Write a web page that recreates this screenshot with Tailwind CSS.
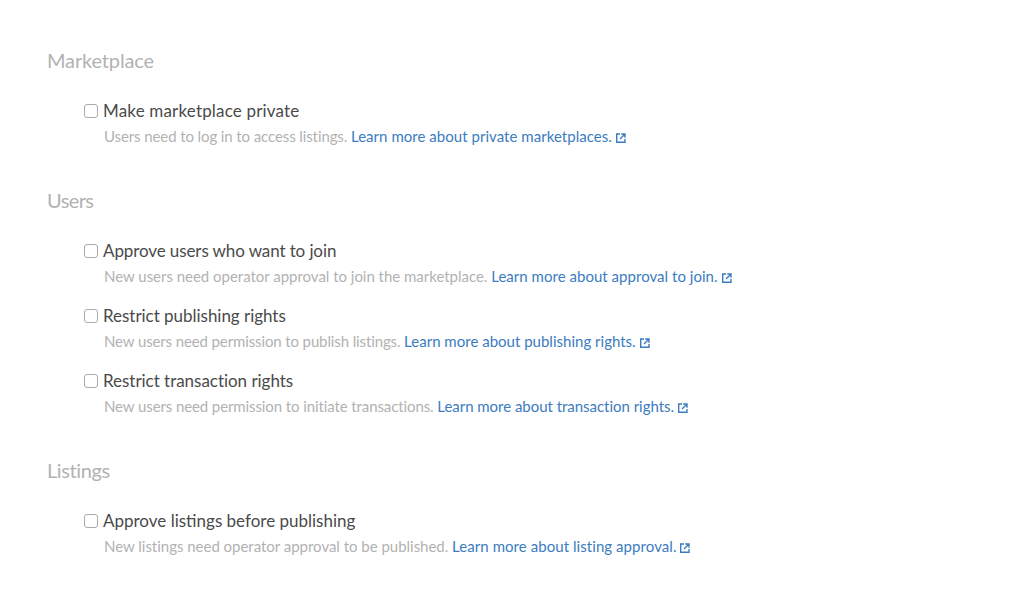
<!DOCTYPE html>
<html><head><meta charset="utf-8"><script src="https://cdn.jsdelivr.net/npm/@tailwindcss/browser@4"></script></head>
<body class="bg-white font-['Lato',sans-serif] antialiased">
<main class="w-[1024px] h-[605px] overflow-hidden pl-[47px] pt-[47px]">
<section>
<h2 class="text-[20px] leading-[26px] tracking-[-0.15px] text-[#b2b2b2]">Marketplace</h2>
<div class="pl-[37px] pt-[25px] flex flex-col">
<div>
<label class="flex items-center h-[26px] gap-[5px] text-[17px] tracking-[0.175px] text-[#4a4a4a]"><span class="w-[14px] h-[14px] border-[1.5px] border-[#ababab] rounded-[3px]"></span>Make marketplace private</label>
<p class="pl-[20px] h-[25px] leading-[25px] text-[15px] tracking-[-0.1px] text-[#b2b2b2]">Users need to log in to access listings. <a class="text-[#3c7cc0] tracking-[0.04px]">Learn more about private marketplaces.<svg class="inline w-[10px] h-[10px] ml-[4px] align-[-1px]" viewBox="0 0 10 10" fill="none" stroke="#3c7cc0" stroke-width="1.4"><path d="M4 1H.7v8.300h8.300V6M5.200 1H9v3.800M9 1L4 6"/></svg></a></p>
</div>
</div>
</section>
<section class="pt-[37.5px]">
<h2 class="text-[20px] leading-[26px] tracking-[-0.6px] text-[#b2b2b2]">Users</h2>
<div class="pl-[37px] pt-[25px] flex flex-col gap-[14.25px]">
<div>
<label class="flex items-center h-[26px] gap-[5px] text-[17px] tracking-[-0.1px] text-[#4a4a4a]"><span class="w-[14px] h-[14px] border-[1.5px] border-[#ababab] rounded-[3px]"></span>Approve users who want to join</label>
<p class="pl-[20px] h-[25px] leading-[25px] text-[15px] tracking-[-0.02px] text-[#b2b2b2]">New users need operator approval to join the marketplace. <a class="text-[#3c7cc0] tracking-[0.03px]">Learn more about approval to join.<svg class="inline w-[10px] h-[10px] ml-[4px] align-[-1px]" viewBox="0 0 10 10" fill="none" stroke="#3c7cc0" stroke-width="1.4"><path d="M4 1H.7v8.300h8.300V6M5.200 1H9v3.800M9 1L4 6"/></svg></a></p>
</div>
<div>
<label class="flex items-center h-[26px] gap-[5px] text-[17px] tracking-[-0.03px] text-[#4a4a4a]"><span class="w-[14px] h-[14px] border-[1.5px] border-[#ababab] rounded-[3px]"></span>Restrict publishing rights</label>
<p class="pl-[20px] h-[25px] leading-[25px] text-[15px] tracking-[-0.12px] text-[#b2b2b2]">New users need permission to publish listings. <a class="text-[#3c7cc0] tracking-[0.01px]">Learn more about publishing rights.<svg class="inline w-[10px] h-[10px] ml-[4px] align-[-1px]" viewBox="0 0 10 10" fill="none" stroke="#3c7cc0" stroke-width="1.4"><path d="M4 1H.7v8.300h8.300V6M5.200 1H9v3.800M9 1L4 6"/></svg></a></p>
</div>
<div>
<label class="flex items-center h-[26px] gap-[5px] text-[17px] tracking-[-0.03px] text-[#4a4a4a]"><span class="w-[14px] h-[14px] border-[1.5px] border-[#ababab] rounded-[3px]"></span>Restrict transaction rights</label>
<p class="pl-[20px] h-[25px] leading-[25px] text-[15px] tracking-[-0.1px] text-[#b2b2b2]">New users need permission to initiate transactions. <a class="text-[#3c7cc0] tracking-[-0.03px]">Learn more about transaction rights.<svg class="inline w-[10px] h-[10px] ml-[4px] align-[-1px]" viewBox="0 0 10 10" fill="none" stroke="#3c7cc0" stroke-width="1.4"><path d="M4 1H.7v8.300h8.300V6M5.200 1H9v3.800M9 1L4 6"/></svg></a></p>
</div>
</div>
</section>
<section class="pt-[37.5px]">
<h2 class="text-[20px] leading-[26px] tracking-[-0.4px] text-[#b2b2b2]">Listings</h2>
<div class="pl-[37px] pt-[25px] flex flex-col">
<div>
<label class="flex items-center h-[26px] gap-[5px] text-[17px] tracking-[0px] text-[#4a4a4a]"><span class="w-[14px] h-[14px] border-[1.5px] border-[#ababab] rounded-[3px]"></span>Approve listings before publishing</label>
<p class="pl-[20px] h-[25px] leading-[25px] text-[15px] tracking-[-0.02px] text-[#b2b2b2]">New listings need operator approval to be published. <a class="text-[#3c7cc0] tracking-[0.06px]">Learn more about listing approval.<svg class="inline w-[10px] h-[10px] ml-[4px] align-[-1px]" viewBox="0 0 10 10" fill="none" stroke="#3c7cc0" stroke-width="1.4"><path d="M4 1H.7v8.300h8.300V6M5.200 1H9v3.800M9 1L4 6"/></svg></a></p>
</div>
</div>
</section>
</main>
</body></html>
